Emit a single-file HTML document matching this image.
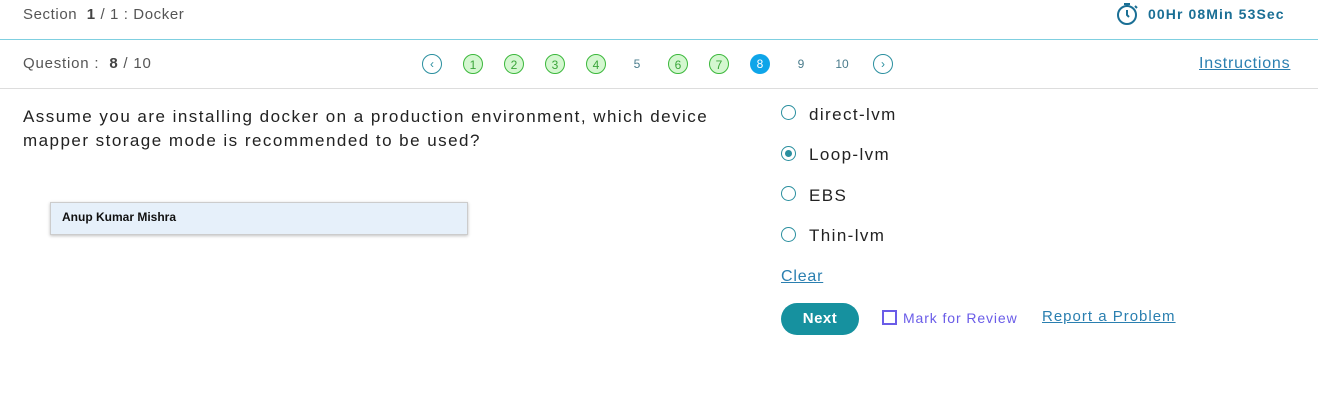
<!DOCTYPE html>
<html><head><style>
body{margin:0;width:1318px;height:419px;background:#fff;font-family:"Liberation Sans",sans-serif;position:relative;overflow:hidden}
.a{position:absolute;white-space:nowrap}
.c{position:absolute;width:20px;height:20px;border-radius:50%;top:54px;font-size:12px;line-height:20px;text-align:center;box-sizing:border-box}
.g{background:#d4f7d0;border:1px solid #3cb83c;color:#3aa63a}
.p{color:#4a7c8c;border:none}
.r{position:absolute;left:781px;width:15px;height:15px;border:1.5px solid #2a8f9f;border-radius:50%;box-sizing:border-box}
.o{position:absolute;left:809px;font-size:17px;color:#222;letter-spacing:1.4px}
</style></head><body>
<div class="a" style="left:23px;top:6px;font-size:15px;color:#555;letter-spacing:.6px">Section &nbsp;<b style="color:#444">1</b> / 1 : Docker</div>
<svg class="a" style="left:1116px;top:1px" width="24" height="26" viewBox="0 0 24 26"><circle cx="11" cy="14" r="9" fill="none" stroke="#1a6f95" stroke-width="2"/><path d="M8 3h6M11 3v2M19 5l2 2M11 9v5l2 2" stroke="#1a6f95" stroke-width="2" fill="none"/></svg>
<div class="a" style="left:1148px;top:6px;font-size:14px;font-weight:bold;color:#1a6f95;letter-spacing:1.1px">00Hr 08Min 53Sec</div>
<div class="a" style="left:0;top:39px;width:1318px;height:1px;background:#7fcfe0"></div>
<div class="a" style="left:23px;top:55px;font-size:15px;color:#555;letter-spacing:.8px">Question : &nbsp;<b style="color:#444">8</b> / 10</div>
<div class="c" style="left:422px;border:1px solid #2a8f9f;color:#2a8f9f;line-height:18px">&#8249;</div>
<div class="c g" style="left:463px">1</div>
<div class="c g" style="left:504px">2</div>
<div class="c g" style="left:545px">3</div>
<div class="c g" style="left:586px">4</div>
<div class="c p" style="left:627px">5</div>
<div class="c g" style="left:668px">6</div>
<div class="c g" style="left:709px">7</div>
<div class="c" style="left:750px;background:#0ea5e9;color:#fff">8</div>
<div class="c p" style="left:791px">9</div>
<div class="c p" style="left:832px">10</div>
<div class="c" style="left:873px;border:1px solid #2a8f9f;color:#2a8f9f;line-height:18px">&#8250;</div>
<div class="a" style="left:1199px;top:55px;font-size:16px;color:#2a7fb0;text-decoration:underline;letter-spacing:.8px">Instructions</div>
<div class="a" style="left:0;top:88px;width:1318px;height:1px;background:#ddd"></div>
<div class="a" style="left:23px;top:105px;font-size:17px;line-height:24px;color:#222;letter-spacing:1.47px">Assume you are installing docker on a production environment, which device<br>mapper storage mode is recommended to be used?</div>
<div class="a" style="left:50px;top:202px;width:418px;height:33px;background:#e6f0fa;border:1px solid #ccc;box-shadow:0 1px 3px rgba(0,0,0,.25);box-sizing:border-box"></div>
<div class="a" style="left:62px;top:210px;font-size:12px;font-weight:bold;color:#111">Anup Kumar Mishra</div>
<div class="r" style="top:105px"></div><div class="o" style="top:105px">direct-lvm</div>
<div class="r" style="top:146px"></div><div class="a" style="left:785px;top:150px;width:7px;height:7px;border-radius:50%;background:#2a8f9f"></div><div class="o" style="top:145px">Loop-lvm</div>
<div class="r" style="top:186px"></div><div class="o" style="top:186px">EBS</div>
<div class="r" style="top:227px"></div><div class="o" style="top:226px">Thin-lvm</div>
<div class="a" style="left:781px;top:268px;font-size:16px;color:#2a7fb0;text-decoration:underline;letter-spacing:.8px">Clear</div>
<div class="a" style="left:781px;top:303px;width:78px;height:32px;border-radius:16px;background:#16919f;color:#fff;font-size:15px;font-weight:bold;text-align:center;line-height:32px;letter-spacing:.5px">Next</div>
<div class="a" style="left:882px;top:310px;width:15px;height:15px;border:2px solid #6a5ce8;box-sizing:border-box"></div>
<div class="a" style="left:903px;top:310px;font-size:14px;color:#6a5ce8;letter-spacing:.9px">Mark for Review</div>
<div class="a" style="left:1042px;top:308px;font-size:15px;color:#2a7fb0;text-decoration:underline;letter-spacing:1px">Report a Problem</div>
</body></html>
